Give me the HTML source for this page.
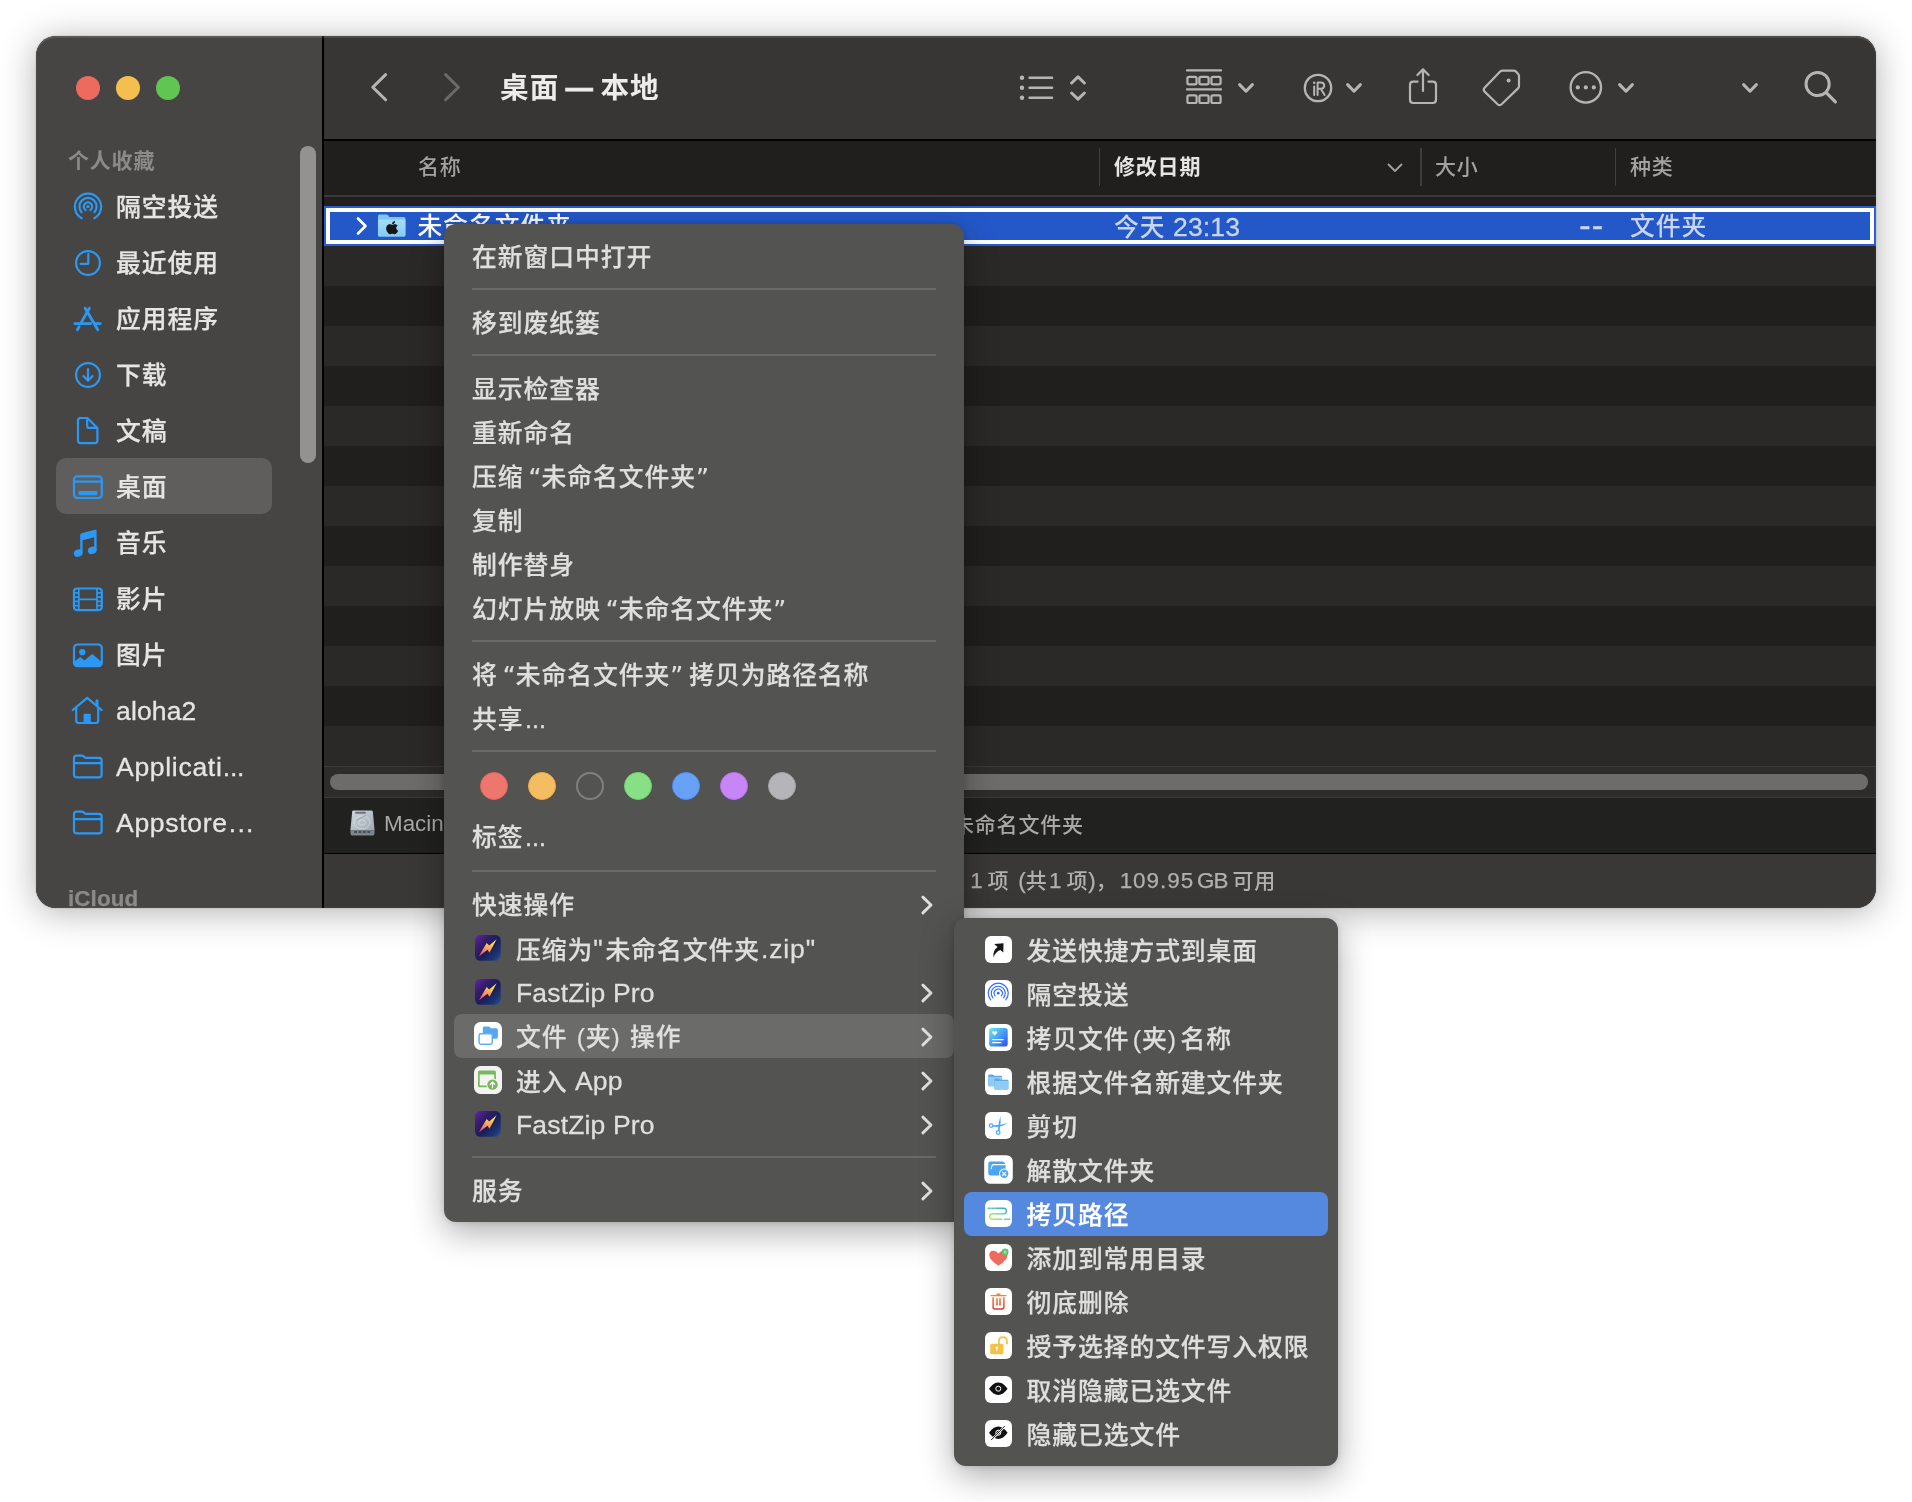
<!DOCTYPE html>
<html lang="zh-CN">
<head>
<meta charset="utf-8">
<title>Finder</title>
<style>
html,body{margin:0;padding:0;background:#fff;}
body{width:1912px;height:1502px;position:relative;overflow:hidden;font-family:"Liberation Sans","Noto Sans CJK SC",sans-serif;-webkit-font-smoothing:antialiased;}
.a{position:absolute;}
#win,.menu{will-change:transform;}
svg{position:absolute;overflow:visible;}
#win{left:36px;top:36px;width:1840px;height:872px;border-radius:20px;overflow:hidden;background:#201f1e;}
#winshadow{left:36px;top:36px;width:1840px;height:872px;border-radius:20px;box-shadow:0 4px 36px rgba(0,0,0,.31),0 0 1.5px rgba(0,0,0,.3);}
#sidebar{left:0;top:0;width:286px;height:872px;background:#474544;}
#divider{left:286px;top:0;width:2px;height:872px;background:#000;}
#toolbar{left:288px;top:0;width:1552px;height:103px;background:#373635;}
#tbline{left:288px;top:103px;width:1552px;height:2px;background:#000;}
#colhead{left:288px;top:105px;width:1552px;height:54px;background:#201f1e;}
#colline{left:288px;top:159px;width:1552px;height:1.5px;background:#3a3938;}
.stripe{left:288px;width:1552px;height:40px;background:#2a2928;}
.sbh{left:32px;font-size:21px;letter-spacing:.8px;font-weight:bold;color:#8b8a89;line-height:28px;white-space:nowrap;}
.sbi{left:80px;font-size:24.8px;letter-spacing:.95px;font-weight:500;-webkit-text-stroke:.25px #e6e5e4;color:#e6e5e4;line-height:36px;white-space:nowrap;}
.ch{font-size:21px;letter-spacing:.8px;font-weight:500;color:#a3a2a1;line-height:30px;top:116px;white-space:nowrap;}
.sbi .l,.mi .l{position:relative;top:-1.2px;}
.q{font-family:"DejaVu Sans",sans-serif;font-size:25px;letter-spacing:0;font-weight:400;}
.e{font-family:"Liberation Sans",sans-serif;font-size:22px;letter-spacing:0;font-weight:400;-webkit-text-stroke:.6px currentColor;margin-left:1px;}
.l22{font-size:22.4px;letter-spacing:.1px;font-weight:400;-webkit-text-stroke:.25px currentColor;}
.csep{top:112px;width:1.5px;height:38px;background:#3f3e3d;}
.menu{background:#535352;border-radius:12px;box-shadow:0 10px 34px rgba(0,0,0,.33),0 0 6px rgba(0,0,0,.15);}
.mi{left:28px;font-size:24.8px;letter-spacing:.95px;color:#dfdfde;line-height:36px;white-space:nowrap;font-weight:500;-webkit-text-stroke:.25px currentColor;}
.l{font-size:26.5px;letter-spacing:.15px;font-weight:400;-webkit-text-stroke:.3px currentColor;}
.ms{left:28px;width:464px;height:2px;background:#6b6a69;}
.si{left:72px;font-size:26px;color:#dfdfde;line-height:36px;white-space:nowrap;}
.ic{left:30px;width:28px;height:28px;border-radius:6.5px;background:#fff;overflow:hidden;}
</style>
</head>
<body>
<div class="a" id="winshadow"></div>
<div class="a" id="win">
  <div class="a" id="sidebar"></div>
  <div class="a" id="divider"></div>
  <div class="a" id="toolbar"></div>
  <div class="a" id="tbline"></div>
  <div class="a" id="colhead"></div>
  <div class="a" id="colline"></div>
  
  <div class="a stripe" style="top:210px"></div>
  <div class="a stripe" style="top:290px"></div>
  <div class="a stripe" style="top:370px"></div>
  <div class="a stripe" style="top:450px"></div>
  <div class="a stripe" style="top:530px"></div>
  <div class="a stripe" style="top:610px"></div>
  <div class="a stripe" style="top:690px"></div>
  <!-- selected row -->
  <div class="a" id="selrow" style="left:288px;top:170px;width:1552px;height:40px;background:#2458c9;box-sizing:border-box;border:2px solid #2a5bd0;"></div>
  <div class="a" style="left:290px;top:172px;width:1548px;height:36px;box-sizing:border-box;border:4.4px solid #fff;border-bottom-width:4.6px;"></div>
  <svg style="left:320px;top:180px" width="12" height="20" viewBox="0 0 12 20"><path d="M2 2.5 L9.5 10 L2 17.5" fill="none" stroke="#fff" stroke-width="2.6" stroke-linecap="round" stroke-linejoin="round"/></svg>
  <!-- folder icon -->
  <svg style="left:341.2px;top:178.4px" width="29.4" height="23.2" viewBox="0 0 30 24" preserveAspectRatio="none">
    <defs><linearGradient id="fg" x1="0" y1="0" x2="0" y2="1"><stop offset="0" stop-color="#a5dcf9"/><stop offset="1" stop-color="#86cbf1"/></linearGradient></defs>
    <path d="M1 2.2 Q1 0.6 2.6 0.6 L9.6 0.6 Q10.8 0.6 11.6 1.6 L12.6 3 L27.4 3 Q29 3 29 4.6 L29 21.8 Q29 23.4 27.4 23.4 L2.6 23.4 Q1 23.4 1 21.8 Z" fill="#7fc6ef"/>
    <path d="M1 5.6 L29 5.6 L29 21.8 Q29 23.4 27.4 23.4 L2.6 23.4 Q1 23.4 1 21.8 Z" fill="url(#fg)"/>
    <g transform="translate(8.04,7.2) scale(0.018,0.0163)" fill="#151515">
      <path d="M788 640c-1-105 86-156 90-158-49-72-125-82-152-83-65-7-126 38-159 38s-84-37-138-36c-71 1-136 41-173 105-74 128-19 317 53 421 35 51 77 108 132 106 53-2 73-34 137-34s82 34 138 33c57-1 93-52 128-103 40-59 57-116 58-119-1-1-111-43-112-170zM683 330c29-35 49-84 43-133-42 2-93 28-123 63-27 31-51 81-44 129 47 4 95-24 124-59z" transform="translate(-150,-190)"/>
    </g>
  </svg>
  <div class="a" style="left:381.5px;top:173px;font-size:24.8px;letter-spacing:.95px;font-weight:500;line-height:36px;color:#fff;white-space:nowrap;">未命名文件夹</div>
  <div class="a" style="left:1078px;top:173px;font-size:24.8px;letter-spacing:.95px;font-weight:500;line-height:36px;color:#c9d6f3;white-space:nowrap;">今天<span class="l"> 23:13</span></div>
  <div class="a" style="left:1502.4px;width:66px;text-align:right;top:170.6px;font-size:34px;letter-spacing:1.2px;-webkit-text-stroke:.5px #c9d6f3;line-height:36px;color:#c9d6f3;white-space:nowrap;">--</div>
  <div class="a" style="left:1594px;top:173px;font-size:24.8px;letter-spacing:.95px;font-weight:500;line-height:36px;color:#c9d6f3;white-space:nowrap;">文件夹</div>
  <!-- column header -->
  <div class="a ch" style="left:382px">名称</div>
  <div class="a csep" style="left:1062.5px"></div>
  <div class="a ch" style="left:1078px;font-weight:bold;color:#e6e5e4">修改日期</div>
  <svg style="left:1351px;top:127px" width="16" height="10" viewBox="0 0 16 10"><path d="M1.5 1.5 L8 8 L14.5 1.5" fill="none" stroke="#a3a2a1" stroke-width="1.8" stroke-linecap="round" stroke-linejoin="round"/></svg>
  <div class="a csep" style="left:1384px"></div>
  <div class="a ch" style="left:1399px">大小</div>
  <div class="a csep" style="left:1578.5px"></div>
  <div class="a ch" style="left:1594px">种类</div>
  <!-- h scroll -->
  <div class="a" style="left:288px;top:730px;width:1552px;height:31.5px;background:#2d2c2b;border-top:1.5px solid #3b3a39;border-bottom:1.5px solid #3b3a39;box-sizing:border-box;"></div>
  <div class="a" style="left:294px;top:738px;width:1538px;height:16px;border-radius:8px;background:#6d6c6b;"></div>
  <!-- path bar -->
  <div class="a" style="left:288px;top:761.5px;width:1552px;height:55.5px;background:#212120;"></div>
  <div class="a" style="left:288px;top:816.5px;width:1552px;height:1.5px;background:#000;"></div>
  <svg style="left:313.6px;top:774.4px" width="25" height="26" viewBox="0 0 25 26">
    <defs><linearGradient id="dk" x1="0" y1="0" x2="1" y2="1"><stop offset="0" stop-color="#cfd6db"/><stop offset="0.55" stop-color="#b4bec6"/><stop offset="1" stop-color="#9aa6b0"/></linearGradient></defs>
    <path d="M3.6 0.4 L21.4 0.4 Q22.6 0.4 22.8 1.6 L24.6 20.6 L0.4 20.6 L2.2 1.6 Q2.4 0.4 3.6 0.4 Z" fill="url(#dk)"/>
    <path d="M0.4 20.6 L24.6 20.6 L24.4 24 Q24.3 25.4 23 25.4 L2 25.4 Q0.7 25.4 0.6 24 Z" fill="#7d868d"/>
    <path d="M4 22 L7 22 M8.4 22 L11.4 22 M12.8 22 L15.8 22 M17.2 22 L20.2 22" stroke="#3b4045" stroke-width="1.6"/>
    <rect x="5.2" y="1.8" width="10.4" height="2" rx="0.4" fill="#6d757b"/>
    <ellipse cx="12" cy="12.4" rx="8" ry="6.4" fill="none" stroke="#e3e8ec" stroke-width="0.7" opacity=".8"/>
    <ellipse cx="12" cy="12.6" rx="3.4" ry="2.7" fill="none" stroke="#e3e8ec" stroke-width="0.7" opacity=".8"/>
    <path d="M16 5.4 Q10 8 6.4 10.4" fill="none" stroke="#8b959d" stroke-width="0.7"/>
  </svg>
  <div class="a" id="pathmac" style="left:348px;top:773px;font-size:22.4px;line-height:30px;color:#a9a8a7;white-space:nowrap;">Macintosh HD</div>
  <div class="a" id="pathfolder" style="left:917px;top:774px;font-size:21px;letter-spacing:.8px;font-weight:500;line-height:30px;color:#a9a8a7;white-space:nowrap;">未命名文件夹</div>
  <!-- status bar -->
  <div class="a" style="left:288px;top:818px;width:1552px;height:54px;background:#393837;"></div>
  <div class="a" id="status" style="left:864px;top:830px;font-size:21px;letter-spacing:.8px;font-weight:500;line-height:30px;color:#b1b0af;white-space:nowrap;">选择了<span class="l22" style="word-spacing:-1.5px"> 1 </span>项<span class="l22" style="word-spacing:2.5px"> (</span>共<span class="l22" style="word-spacing:-1.5px;margin-left:-3.4px"> 1 </span>项<span class="l22">)</span>，<span class="l22" style="margin-left:2px;letter-spacing:1px">109.95</span><span class="l22" style="letter-spacing:-.8px;word-spacing:-2.6px;margin-right:2px"> GB </span>可用</div>

  <div class="a" style="left:20px;top:422px;width:216px;height:56px;border-radius:10px;background:#5f5e5d;"></div>
  <div class="a" style="left:264px;top:110px;width:16px;height:317px;border-radius:8px;background:#939291;"></div>
  <div class="a sbh" style="top:111px">个人收藏</div>
  <div class="a sbi" style="top:154px">隔空投送</div>
  <div class="a sbi" style="top:210px">最近使用</div>
  <div class="a sbi" style="top:266px">应用程序</div>
  <div class="a sbi" style="top:322px">下载</div>
  <div class="a sbi" style="top:378px">文稿</div>
  <div class="a sbi" style="top:434px">桌面</div>
  <div class="a sbi" style="top:490px">音乐</div>
  <div class="a sbi" style="top:546px">影片</div>
  <div class="a sbi" style="top:602px">图片</div>
  <div class="a sbi" style="top:658px"><span class="l">aloha2</span></div>
  <div class="a sbi" style="top:714px"><span class="l" style="letter-spacing:.7px">Applicati<span style="letter-spacing:-.3px;margin-left:.4px">...</span></span></div>
  <div class="a sbi" style="top:770px"><span class="l" style="letter-spacing:.7px">Appstore<span style="letter-spacing:1.2px;margin-left:1.2px">...</span></span></div>
  <div class="a sbh" style="top:849px"><span class="l22" style="font-weight:bold">iCloud</span></div>
  
<svg style="left:0;top:0" width="286" height="872" viewBox="36 36 286 872" fill="none" stroke="#2a99f6" stroke-width="2.2" stroke-linecap="round" stroke-linejoin="round">
  <!-- airdrop -->
  <g>
    <path d="M81.7 218.2 A13.1 13.1 0 1 1 94.3 218.2"/>
    <path d="M81.6 212.3 A8.6 8.6 0 1 1 94.4 212.3"/>
    <path d="M85.6 210.0 A4.2 4.2 0 1 1 90.4 210.0"/>
    <circle cx="88" cy="206.6" r="1.7" fill="#2a99f6" stroke="none"/>
  </g>
  <!-- clock -->
  <circle cx="88" cy="263" r="11.9"/>
  <path d="M88.3 254.2 L88.3 263.8 L80.6 263.8"/>
  <!-- apps -->
  <g stroke-width="2.8">
    <path d="M89.4 308.2 L81.2 322.6 M79.2 326.6 L77.4 329.8 M85.2 308.2 L97.8 329.8 M74.8 323.6 L90.6 323.6 M94.6 323.6 L100.4 323.6"/>
  </g>
  <!-- download -->
  <circle cx="88" cy="375" r="11.9"/>
  <path d="M88 369.2 L88 380.2 M83.4 376 L88 380.6 L92.6 376"/>
  <!-- document -->
  <path d="M80.6 418 L87.4 418 L97.4 428 L97.4 440.6 Q97.4 443.2 94.8 443.2 L80.6 443.2 Q78 443.2 78 440.6 L78 420.6 Q78 418 80.6 418 Z M87.2 418.4 L87.2 426 Q87.2 427.8 89 427.8 L97 427.8"/>
  <!-- desktop -->
  <rect x="74" y="476.4" width="27.8" height="21.6" rx="3.2"/>
  <path d="M74 481.6 L101.8 481.6"/>
  <rect x="78.4" y="491" width="19" height="4.2" rx="1.4" fill="#2a99f6" stroke="none"/>
  <!-- music -->
  <g fill="#2a99f6" stroke="none">
    <ellipse cx="78.2" cy="553.2" rx="4.4" ry="3.6" transform="rotate(-20 78.2 553.2)"/>
    <ellipse cx="92.2" cy="550.4" rx="4.4" ry="3.6" transform="rotate(-20 92.2 550.4)"/>
    <path d="M80.2 535 Q80.2 533.6 81.6 533.2 L95 529.8 Q96.6 529.4 96.6 531 L96.6 550.6 L94.2 550.6 L94.2 537.2 L82.6 540.2 L82.6 553.4 L80.2 553.4 Z"/>
  </g>
  <!-- film -->
  <rect x="74" y="588.5" width="27.8" height="21.6" rx="3"/>
  <path d="M78.8 588.5 L78.8 610 M97 588.5 L97 610 M78.8 599.3 L97 599.3 M74 592.8 L78.8 592.8 M74 597.1 L78.8 597.1 M74 601.4 L78.8 601.4 M74 605.7 L78.8 605.7 M97 592.8 L101.8 592.8 M97 597.1 L101.8 597.1 M97 601.4 L101.8 601.4 M97 605.7 L101.8 605.7" stroke-width="1.7"/>
  <!-- pictures -->
  <rect x="74" y="644.5" width="27.8" height="21.6" rx="3.4"/>
  <circle cx="82.3" cy="652.2" r="3.1" fill="#2a99f6" stroke="none"/>
  <path d="M74.4 661.4 L79.6 657.4 Q80.3 656.9 81 657.5 L84.4 660.4 L91.4 654.6 Q92.3 653.9 93.2 654.7 L101.4 661.8 L101.4 663.4 Q101.4 665.6 98.8 665.6 L77 665.6 Q74.4 665.6 74.4 663.4 Z" fill="#2a99f6" stroke="none"/>
  <!-- home -->
  <path d="M72.8 710 L87.2 697.8 L101.6 710 M76.2 708 L76.2 720.6 Q76.2 723 78.6 723 L95.8 723 Q98.2 723 98.2 720.6 L98.2 708"/>
  <path d="M97 700.8 L97 705.4" stroke-width="3"/>
  <path d="M83.6 714.8 Q83.6 713.8 84.6 713.8 L89.8 713.8 Q90.8 713.8 90.8 714.8 L90.8 723 L83.6 723 Z" fill="#2a99f6" stroke="none"/>
  <!-- folders -->
  <path d="M74 758.1 Q74 755.6 76.5 755.6 L81.6 755.6 Q82.8 755.6 83.6 756.4 L84.6 757.2 Q85.2 757.8 86.4 757.8 L99 757.8 Q101.6 757.8 101.6 760.4 L101.6 774.8 Q101.6 777.4 99 777.4 L76.6 777.4 Q74 777.4 74 774.8 Z M74 763.2 L101.6 763.2"/>
  <path d="M74 814.1 Q74 811.6 76.5 811.6 L81.6 811.6 Q82.8 811.6 83.6 812.4 L84.6 813.2 Q85.2 813.8 86.4 813.8 L99 813.8 Q101.6 813.8 101.6 816.4 L101.6 830.8 Q101.6 833.4 99 833.4 L76.6 833.4 Q74 833.4 74 830.8 Z M74 819.2 L101.6 819.2"/>
</svg>

  <div class="a" style="left:40px;top:40px;width:24px;height:24px;border-radius:12px;background:#ed6a5e;"></div>
  <div class="a" style="left:80px;top:40px;width:24px;height:24px;border-radius:12px;background:#f5bf4f;"></div>
  <div class="a" style="left:120px;top:40px;width:24px;height:24px;border-radius:12px;background:#61c554;"></div>
  
<div class="a" id="title" style="left:464px;top:31px;font-size:28.6px;letter-spacing:1.1px;font-weight:bold;line-height:42px;color:#edecea;white-space:nowrap;">桌面<span style="letter-spacing:0;font-size:27px;margin:0 7.6px 0 6.4px;-webkit-text-stroke:.9px #edecea;position:relative;top:-0.7px">—</span>本地</div>
<svg style="left:288px;top:0" width="1552" height="104" viewBox="324 36 1552 104" fill="none" stroke="#b6b5b4" stroke-width="2.3" stroke-linecap="round" stroke-linejoin="round">
  <path d="M385.6 74.6 L372.8 87.2 L385.6 99.8" stroke-width="3"/>
  <path d="M445.6 74.6 L458.4 87.2 L445.6 99.8" stroke-width="3" stroke="#6b6a69"/>
  <!-- list -->
  <g stroke-width="2.6">
    <path d="M1029.6 77.8 L1052 77.8 M1029.6 87.8 L1052 87.8 M1029.6 97.8 L1052 97.8"/>
    <path d="M1022 77.8 L1022.01 77.8 M1022 87.8 L1022.01 87.8 M1022 97.8 L1022.01 97.8" stroke-width="4.4"/>
  </g>
  <path d="M1071.6 83 L1078 76.8 L1084.4 83 M1071.6 93 L1078 99.2 L1084.4 93" stroke-width="3"/>
  <!-- group -->
  <g stroke-width="2.2">
    <path d="M1187 70.4 L1221 70.4 M1187 89.4 L1221 89.4"/>
    <rect x="1187.4" y="76.8" width="9.2" height="7.6" rx="1.6"/>
    <rect x="1199.4" y="76.8" width="9.2" height="7.6" rx="1.6"/>
    <rect x="1211.4" y="76.8" width="9.2" height="7.6" rx="1.6"/>
    <rect x="1187.4" y="95.4" width="9.2" height="7.6" rx="1.6"/>
    <rect x="1199.4" y="95.4" width="9.2" height="7.6" rx="1.6"/>
    <rect x="1211.4" y="95.4" width="9.2" height="7.6" rx="1.6"/>
  </g>
  <path d="M1239.6 84.60000000000001 L1246 91.2 L1252.4 84.60000000000001" stroke-width="3"/>
  <!-- iR -->
  <circle cx="1318" cy="88" r="13.2"/>
  <path d="M1314.2 86.4 L1314.2 95 M1317.6 95 L1317.6 82.4 L1320.6 82.4 Q1324.2 82.4 1324.2 85.6 Q1324.2 88.8 1320.6 88.8 L1317.6 88.8 M1320.8 88.8 L1324.6 95" stroke-width="2"/>
  <circle cx="1314.2" cy="82.8" r="1.3" fill="#b6b5b4" stroke="none"/>
  <path d="M1347.6 84.60000000000001 L1354 91.2 L1360.4 84.60000000000001" stroke-width="3"/>
  <!-- share -->
  <path d="M1417.6 81.6 L1413.2 81.6 Q1410 81.6 1410 84.8 L1410 99.8 Q1410 103 1413.2 103 L1432.8 103 Q1436 103 1436 99.8 L1436 84.8 Q1436 81.6 1432.8 81.6 L1428.4 81.6" stroke-width="2.2"/>
  <path d="M1423 69.8 L1423 91 M1417.4 75 L1423 69.4 L1428.6 75" stroke-width="2.2"/>
  <!-- tag -->
  <path d="M1502.6 70.6 L1513.6 70.6 Q1515 70.6 1516 71.6 L1518 73.8 Q1519 74.8 1519 76.2 L1519 86 Q1519 87.4 1518 88.4 L1501.6 104.2 Q1499.6 106 1497.6 104.2 L1484.6 91.6 Q1482.8 89.8 1484.6 87.8 L1500.2 71.6 Q1501.2 70.6 1502.6 70.6 Z" stroke-width="2.2"/>
  <circle cx="1508.6" cy="80.4" r="2" fill="#b6b5b4" stroke="none"/>
  <!-- ellipsis -->
  <circle cx="1585.8" cy="87.4" r="15.2"/>
  <circle cx="1577.8" cy="87.4" r="2.1" fill="#b6b5b4" stroke="none"/>
  <circle cx="1585.8" cy="87.4" r="2.1" fill="#b6b5b4" stroke="none"/>
  <circle cx="1593.8" cy="87.4" r="2.1" fill="#b6b5b4" stroke="none"/>
  <path d="M1619.6 84.60000000000001 L1626 91.2 L1632.4 84.60000000000001" stroke-width="3"/>
  <path d="M1743.6 84.60000000000001 L1750 91.2 L1756.4 84.60000000000001" stroke-width="3"/>
  <!-- search -->
  <circle cx="1817.6" cy="84" r="11.6" stroke-width="3"/>
  <path d="M1826.2 92.6 L1835.4 101.8" stroke-width="3.2"/>
</svg>

  <div class="a" style="left:0;top:0;width:1840px;height:872px;border-radius:20px;box-shadow:inset 0 2px 0 rgba(255,255,255,.09),inset 0 0 0 1px rgba(255,255,255,.04);pointer-events:none;"></div>
</div>
<div class="a menu" id="menu1" style="left:444px;top:224px;width:520px;height:998px;">
<div class="a mi" style="left:28px;top:16px;">在新窗口中打开</div>
<div class="a ms" style="top:64px"></div>
<div class="a mi" style="left:28px;top:82px;">移到废纸篓</div>
<div class="a ms" style="top:130px"></div>
<div class="a mi" style="left:28px;top:148px;">显示检查器</div>
<div class="a mi" style="left:28px;top:192px;">重新命名</div>
<div class="a mi" style="left:28px;top:236px;">压缩<span class="q" style="margin-left:5px">“</span>未命名文件夹<span class="q">”</span></div>
<div class="a mi" style="left:28px;top:280px;">复制</div>
<div class="a mi" style="left:28px;top:324px;">制作替身</div>
<div class="a mi" style="left:28px;top:368px;">幻灯片放映<span class="q" style="margin-left:5px">“</span>未命名文件夹<span class="q">”</span></div>
<div class="a ms" style="top:416px"></div>
<div class="a mi" style="left:28px;top:434px;">将<span class="q" style="margin-left:5px">“</span>未命名文件夹<span class="q" style="margin-right:6px">”</span>拷贝为路径名称</div>
<div class="a mi" style="left:28px;top:478px;">共享<span class="e">…</span></div>
<div class="a ms" style="top:526px"></div>
<div class="a" style="left:36px;top:548px;width:28px;height:28px;border-radius:14px;box-sizing:border-box;border:1.6px solid #e9625b;background:#ee766d;"></div>
<div class="a" style="left:84px;top:548px;width:28px;height:28px;border-radius:14px;box-sizing:border-box;border:1.6px solid #f1ad4a;background:#f5bd61;"></div>
<div class="a" style="left:132px;top:548px;width:28px;height:28px;border-radius:14px;box-sizing:border-box;border:2px solid #81807f;"></div>
<div class="a" style="left:180px;top:548px;width:28px;height:28px;border-radius:14px;box-sizing:border-box;border:1.6px solid #6fd56e;background:#87e085;"></div>
<div class="a" style="left:228px;top:548px;width:28px;height:28px;border-radius:14px;box-sizing:border-box;border:1.6px solid #4c90f6;background:#67a2f8;"></div>
<div class="a" style="left:276px;top:548px;width:28px;height:28px;border-radius:14px;box-sizing:border-box;border:1.6px solid #ba70f1;background:#c885f6;"></div>
<div class="a" style="left:324px;top:548px;width:28px;height:28px;border-radius:14px;box-sizing:border-box;border:1.6px solid #a5a4a9;background:#b5b4b9;"></div>
<div class="a mi" style="left:28px;top:596px;">标签<span class="e">…</span></div>
<div class="a ms" style="top:646px"></div>
<div class="a mi" style="left:28px;top:664px;">快速操作</div>
<svg style="left:477px;top:672px" width="12" height="18" viewBox="0 0 12 18"><path d="M1.9 1.1 L10 9 L1.9 16.9" fill="none" stroke="#dfdfde" stroke-width="2.9" stroke-linecap="round" stroke-linejoin="round"/></svg>
<svg style="left:31.2px;top:711.2px" width="25.7" height="25.7" viewBox="0 0 25.7 25.7"><defs><linearGradient id="fz1" x1="0" y1="0" x2="1" y2="1"><stop offset="0" stop-color="#63279c"/><stop offset="0.3" stop-color="#351c70"/><stop offset="0.55" stop-color="#1b1d57"/><stop offset="0.8" stop-color="#1b3470"/><stop offset="1" stop-color="#2a569f"/></linearGradient><linearGradient id="fb1" x1="0" y1="1" x2="0.35" y2="0"><stop offset="0" stop-color="#e63f7e"/><stop offset="0.35" stop-color="#fb7f6a"/><stop offset="0.62" stop-color="#fbab56"/><stop offset="0.85" stop-color="#ffd64a"/><stop offset="1" stop-color="#ffe04a"/></linearGradient></defs><rect width="25.7" height="25.7" rx="5.2" fill="url(#fz1)"/><path d="M3.9 21.3 L11.7 7.9 L14.2 10.5 L21.6 4.2 L14.5 17.8 L12.5 14.8 Z" fill="url(#fb1)"/></svg>
<div class="a mi" style="left:72px;top:708px;">压缩为<span class="l" style="margin-right:2.6px">"</span>未命名文件夹<span class="l" style="letter-spacing:.9px;margin-left:1px">.zip"</span></div>
<svg style="left:31.2px;top:755.2px" width="25.7" height="25.7" viewBox="0 0 25.7 25.7"><defs><linearGradient id="fz2" x1="0" y1="0" x2="1" y2="1"><stop offset="0" stop-color="#63279c"/><stop offset="0.3" stop-color="#351c70"/><stop offset="0.55" stop-color="#1b1d57"/><stop offset="0.8" stop-color="#1b3470"/><stop offset="1" stop-color="#2a569f"/></linearGradient><linearGradient id="fb2" x1="0" y1="1" x2="0.35" y2="0"><stop offset="0" stop-color="#e63f7e"/><stop offset="0.35" stop-color="#fb7f6a"/><stop offset="0.62" stop-color="#fbab56"/><stop offset="0.85" stop-color="#ffd64a"/><stop offset="1" stop-color="#ffe04a"/></linearGradient></defs><rect width="25.7" height="25.7" rx="5.2" fill="url(#fz2)"/><path d="M3.9 21.3 L11.7 7.9 L14.2 10.5 L21.6 4.2 L14.5 17.8 L12.5 14.8 Z" fill="url(#fb2)"/></svg>
<div class="a mi" style="left:72px;top:752px;"><span class="l">FastZip Pro</span></div>
<svg style="left:477px;top:760px" width="12" height="18" viewBox="0 0 12 18"><path d="M1.9 1.1 L10 9 L1.9 16.9" fill="none" stroke="#dfdfde" stroke-width="2.9" stroke-linecap="round" stroke-linejoin="round"/></svg>
<div class="a" style="left:10px;top:790px;width:500px;height:44px;border-radius:8px;background:#6b6b6a;"></div>
<svg style="left:30px;top:798px" width="28" height="28" viewBox="0 0 28 28"><rect width="28" height="28" rx="6.5" fill="#fff"/><path d="M8.8 6 Q8.8 4.4 10.4 4.4 L14.4 4.4 Q15.4 4.4 16 5.2 L16.8 6.2 L22.2 6.2 Q23.9 6.2 23.9 7.9 L23.9 15.1 Q23.9 16.8 22.2 16.8 L10.5 16.8 Q8.8 16.8 8.8 15.1 Z" fill="#55a8ef"/><rect x="5.1" y="11.7" width="13.2" height="10.6" rx="1.7" fill="#fff" stroke="#62b0f3" stroke-width="1.5"/></svg>
<div class="a mi" style="left:72px;top:796px;word-spacing:1.3px;">文件 (夹) 操作</div>
<svg style="left:477px;top:804px" width="12" height="18" viewBox="0 0 12 18"><path d="M1.9 1.1 L10 9 L1.9 16.9" fill="none" stroke="#dfdfde" stroke-width="2.9" stroke-linecap="round" stroke-linejoin="round"/></svg>
<svg style="left:30px;top:842px" width="28" height="28" viewBox="0 0 28 28"><rect width="28" height="28" rx="6.5" fill="#f3f3f1"/><path d="M5.6 4.4 L20.3 4.4 Q21.9 4.4 21.9 6 L21.9 13.4 L20.2 13.4 L20.2 8.4 L5.7 8.4 L5.7 19.6 L13 19.6 L13 21.3 L5.6 21.3 Q4 21.3 4 19.7 L4 6 Q4 4.4 5.6 4.4 Z" fill="#79b75d"/><circle cx="18.5" cy="18.6" r="6.1" fill="#f3f3f1"/><circle cx="18.5" cy="18.6" r="5.2" fill="#79b75d"/><path d="M18.5 21.7 L18.5 16.2 M16.3 18.3 L18.5 16 L20.7 18.3" fill="none" stroke="#fff" stroke-width="1.2" stroke-linecap="round" stroke-linejoin="round"/></svg>
<div class="a mi" style="left:72px;top:840px;">进入<span class="l"> App</span></div>
<svg style="left:477px;top:848px" width="12" height="18" viewBox="0 0 12 18"><path d="M1.9 1.1 L10 9 L1.9 16.9" fill="none" stroke="#dfdfde" stroke-width="2.9" stroke-linecap="round" stroke-linejoin="round"/></svg>
<svg style="left:31.2px;top:887.2px" width="25.7" height="25.7" viewBox="0 0 25.7 25.7"><defs><linearGradient id="fz3" x1="0" y1="0" x2="1" y2="1"><stop offset="0" stop-color="#63279c"/><stop offset="0.3" stop-color="#351c70"/><stop offset="0.55" stop-color="#1b1d57"/><stop offset="0.8" stop-color="#1b3470"/><stop offset="1" stop-color="#2a569f"/></linearGradient><linearGradient id="fb3" x1="0" y1="1" x2="0.35" y2="0"><stop offset="0" stop-color="#e63f7e"/><stop offset="0.35" stop-color="#fb7f6a"/><stop offset="0.62" stop-color="#fbab56"/><stop offset="0.85" stop-color="#ffd64a"/><stop offset="1" stop-color="#ffe04a"/></linearGradient></defs><rect width="25.7" height="25.7" rx="5.2" fill="url(#fz3)"/><path d="M3.9 21.3 L11.7 7.9 L14.2 10.5 L21.6 4.2 L14.5 17.8 L12.5 14.8 Z" fill="url(#fb3)"/></svg>
<div class="a mi" style="left:72px;top:884px;"><span class="l">FastZip Pro</span></div>
<svg style="left:477px;top:892px" width="12" height="18" viewBox="0 0 12 18"><path d="M1.9 1.1 L10 9 L1.9 16.9" fill="none" stroke="#dfdfde" stroke-width="2.9" stroke-linecap="round" stroke-linejoin="round"/></svg>
<div class="a ms" style="top:932px"></div>
<div class="a mi" style="left:28px;top:950px;">服务</div>
<svg style="left:477px;top:958px" width="12" height="18" viewBox="0 0 12 18"><path d="M1.9 1.1 L10 9 L1.9 16.9" fill="none" stroke="#dfdfde" stroke-width="2.9" stroke-linecap="round" stroke-linejoin="round"/></svg>
</div>
<div class="a menu" id="menu2" style="left:954px;top:918px;width:384px;height:548px;">
<div class="a" style="left:9.8px;top:274px;width:364.4px;height:44px;border-radius:8px;background:#5588df;"></div>
<svg style="left:30.6px;top:18.1px" width="27" height="27" viewBox="0 0 27 27"><rect width="27" height="27" rx="6" fill="#fff"/><path d="M9.2 7.9 L18.5 7.3 L18.3 16.6 L15.4 13.9 Q10.6 15.4 8.4 21.4 Q7.6 14.6 12.6 11 Z" fill="#17171a"/></svg>
<div class="a mi" style="left:72.4px;top:16px;">发送快捷方式到桌面</div>
<svg style="left:30.6px;top:62.1px" width="27" height="27" viewBox="0 0 27 27"><rect width="27" height="27" rx="6" fill="#fff"/><path d="M5.74 19.80 A10.0 10.0 0 1 1 20.76 19.80 M7.99 17.82 A7.0 7.0 0 1 1 18.51 17.82 M10.17 15.91 A4.1 4.1 0 1 1 16.33 15.91" fill="none" stroke="#2f6bff" stroke-width="1.15" stroke-linecap="round"/><circle cx="13.25" cy="13.2" r="1.35" fill="#2f6bff"/></svg>
<div class="a mi" style="left:72.4px;top:60px;">隔空投送</div>
<svg style="left:30.6px;top:106.1px" width="27" height="27" viewBox="0 0 27 27"><rect width="27" height="27" rx="6" fill="#fff"/><defs><linearGradient id="g3" x1="0" y1="0" x2="1" y2="1"><stop offset="0" stop-color="#66efe0"/><stop offset="0.45" stop-color="#4aa6f8"/><stop offset="1" stop-color="#2b4cf2"/></linearGradient></defs><rect x="4.1" y="3.9" width="18.6" height="18.6" rx="2.8" fill="url(#g3)"/><path d="M9.7 11.4 L7.5 9.2 Q6.7 8.2 7.6 7.4 Q8.6 6.7 9.7 7.8 Q10.8 6.7 11.8 7.4 Q12.7 8.2 11.9 9.2 Z" fill="#fff"/><path d="M7.6 15.6 L18.2 15.6 M7.6 18.6 L16 18.6" stroke="#fff" stroke-width="1.2" stroke-linecap="round"/></svg>
<div class="a mi" style="left:72.4px;top:104px;word-spacing:-4.4px;">拷贝文件 (夹) 名称</div>
<svg style="left:30.6px;top:150.1px" width="27" height="27" viewBox="0 0 27 27"><rect width="27" height="27" rx="6" fill="#fff"/><path d="M3.2 7.5 Q3.2 6.5 4.2 6.5 L7.4 6.5 Q8.100000000000001 6.5 8.600000000000001 7.1 L9.2 7.8 L16.1 7.8 Q17.1 7.8 17.1 8.8 L17.1 17.2 Q17.1 18.2 16.1 18.2 L4.2 18.2 Q3.2 18.2 3.2 17.2 Z" fill="#5ea9e6"/><path d="M3.2 9.1 L17.1 9.1 L17.1 17.2 Q17.1 18.2 16.1 18.2 L4.2 18.2 Q3.2 18.2 3.2 17.2 Z" fill="#8fcbf5"/><path d="M9.3 11.4 Q9.3 10.4 10.3 10.4 L13.5 10.4 Q14.200000000000001 10.4 14.700000000000001 11.0 L15.3 11.700000000000001 L22.4 11.700000000000001 Q23.4 11.700000000000001 23.4 12.7 L23.4 20.4 Q23.4 21.4 22.4 21.4 L10.3 21.4 Q9.3 21.4 9.3 20.4 Z" fill="#5ea9e6"/><path d="M9.3 13.0 L23.4 13.0 L23.4 20.4 Q23.4 21.4 22.4 21.4 L10.3 21.4 Q9.3 21.4 9.3 20.4 Z" fill="#8fcbf5"/></svg>
<div class="a mi" style="left:72.4px;top:148px;">根据文件名新建文件夹</div>
<svg style="left:30.6px;top:194.1px" width="27" height="27" viewBox="0 0 27 27"><rect width="27" height="27" rx="6" fill="#fff"/><g fill="none" stroke="#48a7f3" stroke-width="1.2"><circle cx="6.1" cy="13.6" r="1.8"/><circle cx="13.2" cy="20.5" r="1.8"/></g><path d="M7.8 13.2 Q15 13.4 23.2 10.9 Q17.4 14.6 11.6 14.9 L7.9 14.4 Z" fill="#48a7f3"/><path d="M12.9 18.8 Q13.2 11 15.4 4.1 Q16.4 11.6 14.4 18.9 Z" fill="#48a7f3"/></svg>
<div class="a mi" style="left:72.4px;top:192px;">剪切</div>
<svg style="left:30.6px;top:238.1px" width="27" height="27" viewBox="0 0 27 27"><rect x="-0.8" y="-0.8" width="28.6" height="28.6" rx="6.4" fill="#fff"/><path d="M3.3 7.6 Q3.3 5.4 5.5 5.4 L17.4 5.4 Q19.4 5.4 19.9 7.2 L20.6 10.2 L20.6 19.4 L5.5 19.4 Q3.3 19.4 3.3 17.2 Z" fill="#4aa6f0"/><path d="M6.2 12.6 L7 9.6 Q7.4 8.6 8.6 8.6 L19.6 8.6" fill="none" stroke="#fff" stroke-width="1.1" stroke-linecap="round"/><circle cx="19.2" cy="17.8" r="5.2" fill="#fff"/><circle cx="19.2" cy="17.8" r="4.2" fill="#4aa6f0"/><path d="M17.5 16.1 L20.9 19.5 M20.9 16.1 L17.5 19.5" stroke="#fff" stroke-width="1.2" stroke-linecap="round"/></svg>
<div class="a mi" style="left:72.4px;top:236px;">解散文件夹</div>
<svg style="left:30.6px;top:282.1px" width="27" height="27" viewBox="0 0 27 27"><rect width="27" height="27" rx="6" fill="#fff"/><defs><linearGradient id="g7" x1="0" y1="1" x2="1" y2="0"><stop offset="0" stop-color="#d4ec3e"/><stop offset="0.5" stop-color="#5fd0a0"/><stop offset="1" stop-color="#2a9fe0"/></linearGradient></defs><path d="M3 8.2 L5.4 8.2 M6.8 8.2 L9 8.2 M10.4 8.2 L18.6 8.2 Q21.4 8.2 21.4 11 Q21.4 13.9 18.6 13.9 L7.4 13.9 Q4.6 13.9 4.6 16.6 Q4.6 19.3 7.4 19.3 L16.6 19.3 M19.2 19.3 L24.6 19.3" fill="none" stroke="url(#g7)" stroke-width="1.4" stroke-linecap="round"/></svg>
<div class="a mi" style="left:72.4px;top:280px;color:#fff;">拷贝路径</div>
<svg style="left:30.6px;top:326.1px" width="27" height="27" viewBox="0 0 27 27"><rect width="27" height="27" rx="6" fill="#fff"/><path d="M13.4 21.8 Q4.4 15.6 4.2 11.2 Q4.2 6.9 8.4 6.8 Q11.4 6.8 13.4 9.6 Q15.4 6.8 18.4 6.8 Q22.6 6.9 22.6 11.2 Q22.4 15.6 13.4 21.8 Z" fill="#ee6a5e"/><circle cx="20.1" cy="8" r="3.4" fill="#5bc566"/><path d="M19.4 6.6 L19.4 9.4 M20.8 6.6 L20.8 9.4" stroke="#d8f5da" stroke-width="0.7"/></svg>
<div class="a mi" style="left:72.4px;top:324px;">添加到常用目录</div>
<svg style="left:30.6px;top:370.1px" width="27" height="27" viewBox="0 0 27 27"><rect width="27" height="27" rx="6" fill="#fff"/><defs><linearGradient id="g9" x1="0" y1="0" x2="0" y2="1"><stop offset="0" stop-color="#f68a2c"/><stop offset="1" stop-color="#df3529"/></linearGradient></defs><path d="M6.2 7.6 L21 7.6 M12 6.2 L15 6.2 M8.1 9.6 L8.1 19 Q8.1 20.9 10 20.9 L17 20.9 Q18.9 20.9 18.9 19 L18.9 9.6 M12 10.6 L12 16.9 M15 10.6 L15 16.9" fill="none" stroke="url(#g9)" stroke-width="1.45" stroke-linecap="round"/></svg>
<div class="a mi" style="left:72.4px;top:368px;">彻底删除</div>
<svg style="left:30.6px;top:414.1px" width="27" height="27" viewBox="0 0 27 27"><rect width="27" height="27" rx="6" fill="#fff"/><rect x="5.2" y="11.7" width="13.2" height="10.6" rx="1.6" fill="#f5c243"/><path d="M14 11.8 L14 9 Q14 5.2 18 5.2 Q21.6 5.2 22 9 L22 11.6" fill="none" stroke="#f5c243" stroke-width="1.7" stroke-linecap="round"/><circle cx="11.8" cy="15.8" r="1.25" fill="#fff"/><path d="M11.8 16 L11.8 18.6" stroke="#fff" stroke-width="1.1" stroke-linecap="round"/></svg>
<div class="a mi" style="left:72.4px;top:412px;">授予选择的文件写入权限</div>
<svg style="left:30.6px;top:458.1px" width="27" height="27" viewBox="0 0 27 27"><rect width="27" height="27" rx="6" fill="#fff"/><path d="M4 12.8 Q8.4 6.6 13.3 6.6 Q18.2 6.6 22.6 12.8 Q18.2 19 13.3 19 Q8.4 19 4 12.8 Z" fill="#111"/><circle cx="13.3" cy="12.7" r="2.5" fill="none" stroke="#fff" stroke-width="1"/></svg>
<div class="a mi" style="left:72.4px;top:456px;">取消隐藏已选文件</div>
<svg style="left:30.6px;top:502.1px" width="27" height="27" viewBox="0 0 27 27"><rect width="27" height="27" rx="6" fill="#fff"/><path d="M4 12.8 Q8.4 6.6 13.3 6.6 Q18.2 6.6 22.6 12.8 Q18.2 19 13.3 19 Q8.4 19 4 12.8 Z" fill="#111"/><circle cx="13.3" cy="12.7" r="2.5" fill="none" stroke="#fff" stroke-width="1"/><path d="M6.4 20 L19.8 6.2" stroke="#fff" stroke-width="2.2"/><path d="M6.2 20 L19.8 6" stroke="#111" stroke-width="0.9"/></svg>
<div class="a mi" style="left:72.4px;top:500px;">隐藏已选文件</div>
</div>
</body>
</html>
